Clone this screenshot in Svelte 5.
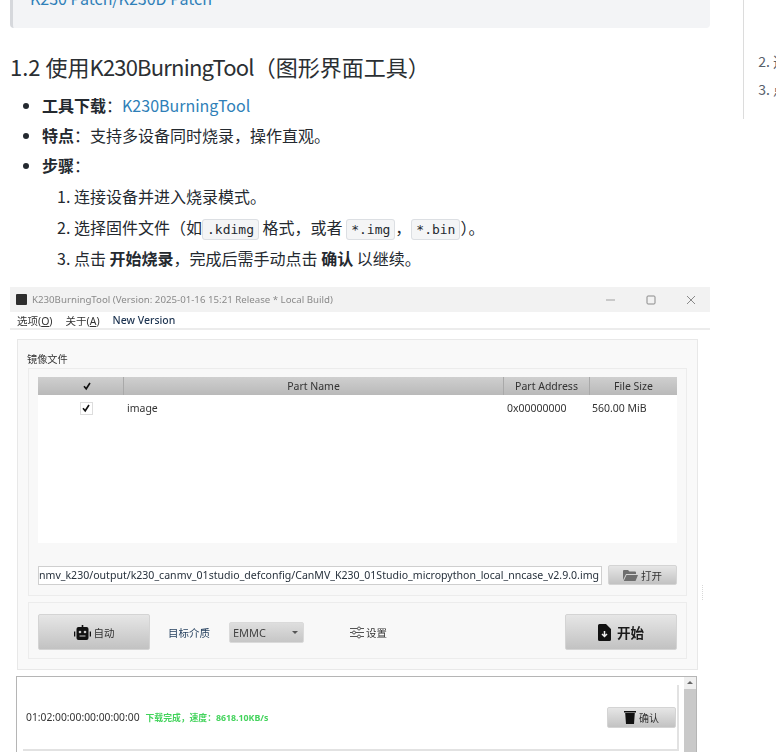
<script>
  const rows = [
    { n: '工具下载', link: 'K230BurningTool' },
    { n: '特点', text: '支持多设备同时烧录，操作直观。' }
  ];
</script>

<div class="page">
  <main class="doc">
    <div class="note"><a href="#p">K230 Patch/K230D Patch</a></div>
    <h3>1.2 使用<span class="latin">K230BurningTool</span>（图形界面工具）</h3>
    <ul>
      {#each rows as r}
        <li>
          <strong>{r.n}</strong>：{#if r.link}<a href="#t">{r.link}</a>{:else}{r.text}{/if}
        </li>
      {/each}
      <li class="steps">
        <div class="stephead"><strong>步骤</strong>：</div>
        <ol>
          <li>连接设备并进入烧录模式。</li>
          <li>选择固件文件（如<code>.kdimg</code> 格式，或者 <code>*.img</code>，<code>*.bin</code>）。</li>
          <li>点击 <strong>开始烧录</strong>，完成后需手动点击 <strong>确认</strong> 以继续。</li>
        </ol>
      </li>
    </ul>

    <div class="shot">
      <span class="speck"></span>
      <div class="titlebar">
        <span class="appicon"></span>
        <span class="title">K230BurningTool (Version: 2025-01-16 15:21 Release * Local Build)</span>
        <span class="winctl">
          <svg width="12" height="12" viewBox="0 0 12 12"><path d="M1 6h9" stroke="#a0a0a0" fill="none" /></svg>
          <svg width="12" height="12" viewBox="0 0 12 12"><rect x="2" y="2" width="8" height="8" rx="1" stroke="#8a8a8a" fill="none" /></svg>
          <svg width="12" height="12" viewBox="0 0 12 12"><path d="M2 2l8 8M10 2l-8 8" stroke="#8a8a8a" fill="none" /></svg>
        </span>
      </div>
      <div class="menubar">
        <span>选项(<u>O</u>)</span><span>关于(<u>A</u>)</span><span class="nv">New Version</span>
      </div>

      <div class="body">
        <section class="outer">
          <div class="legend">镜像文件</div>
          <div class="group filegroup">
            <div class="table">
              <div class="thead">
                <span class="c1"><svg class="tick" viewBox="0 0 10 10"><path d="M2 5.200l2.200 2.600L8 2" /></svg></span>
                <span class="c2">Part Name</span>
                <span class="c3">Part Address</span>
                <span class="c4">File Size</span>
              </div>
              <div class="trow">
                <span class="c1"><span class="check"><svg class="tick" viewBox="0 0 10 10"><path d="M2 5.200l2.200 2.600L8 2" /></svg></span></span>
                <span class="c2 name">image</span>
                <span class="c3 val">0x00000000</span>
                <span class="c4 val">560.00 MiB</span>
              </div>
            </div>
            <div class="pathrow">
              <div class="path"><span>nmv_k230/output/k230_canmv_01studio_defconfig/CanMV_K230_01Studio_micropython_local_nncase_v2.9.0.img</span></div>
              <button class="btn open">
                <svg width="15" height="12" viewBox="0 0 15 12"><path d="M0 2a1 1 0 0 1 1-1h4l1.500 1.500H12a1 1 0 0 1 1 1V5H3L0 11zM3.500 6H15l-2.500 6H.8z" fill="#6e6e6e" /></svg>
                打开
              </button>
            </div>
          </div>

          <div class="group actions">
            <button class="btn big auto">
              <svg width="17" height="15" viewBox="0 0 17 15"><path d="M7.700 0h1.600v2h3.200a2 2 0 0 1 2 2v9a2 2 0 0 1-2 2h-8a2 2 0 0 1-2-2V4a2 2 0 0 1 2-2h3.200zM0 6.500h1.300v5H0zM15.700 6.500H17v5h-1.300z" fill="#111" /><circle cx="6" cy="7" r="1.300" fill="#ccc" /><circle cx="11" cy="7" r="1.300" fill="#ccc" /><path d="M5.500 11h6" stroke="#ccc" /></svg>
              自动
            </button>
            <span class="media">目标介质</span>
            <span class="combo">EMMC<i></i></span>
            <span class="settings">
              <svg width="14" height="13" viewBox="0 0 14 13"><g stroke="#555" fill="#f7f7f7"><path d="M0 2.500h14M0 6.500h14M0 10.500h14" /><circle cx="9" cy="2.500" r="1.500" /><circle cx="4" cy="6.500" r="1.500" /><circle cx="9" cy="10.500" r="1.500" /></g></svg>
              设置
            </span>
            <button class="btn big start">
              <svg width="13" height="17" viewBox="0 0 13 17"><path d="M1.500 0H8l5 5v10.500a1.500 1.500 0 0 1-1.500 1.500h-10A1.500 1.500 0 0 1 0 15.500v-14A1.500 1.500 0 0 1 1.500 0z" fill="#111" /><path d="M6.500 7v5M4 10l2.500 2.500L9 10" stroke="#eee" stroke-width="1.500" fill="none" /></svg>
              开始
            </button>
          </div>
        </section>

        <section class="log">
          <div class="logmain">
            <div class="entry">
              <span class="addr">01:02:00:00:00:00:00:00</span>
              <span class="ok">下载完成，速度：8618.10KB/s</span>
              <button class="btn confirm">
                <svg width="12" height="14" viewBox="0 0 12 14"><path d="M0 1h12v1.500H0zM1.200 3h9.600L10 14H2z" fill="#111" /></svg>
                确认
              </button>
            </div>
          </div>
          <div class="scrollbar"><i></i></div>
        </section>
      </div>
    </div>
  </main>

  <aside class="toc">
    <ol start="2">
      <li>选择固件</li>
      <li>点击开始</li>
    </ol>
  </aside>
</div>

<style>
  :global(body) {
    margin: 0;
    background: #fff;
    overflow: hidden;
  }
  .page {
    width: 776px;
    height: 752px;
    overflow: hidden;
    display: flex;
    align-items: flex-start;
    font-family: "Noto Sans CJK SC", "Noto Sans", sans-serif;
    color: #24292f;
    font-size: 16px;
  }
  a { color: #2f7fb8; text-decoration: none; }
  .doc {
    width: 700px;
    margin-left: 10px;
    flex: none;
  }
  .note {
    height: 28px;
    box-sizing: border-box;
    background: #f3f4f6;
    border-left: 3px solid #d6d8dc;
    border-radius: 0 0 4px 4px;
    padding-left: 17px;
    line-height: 10px;
    overflow: hidden;
  }
  .note a { position: relative; top: -7px; display: block; }
  h3 {
    margin: 20px 0 0 0;
    font-size: 22px;
    font-weight: 400;
    line-height: 36px;
    color: #2b2f33;
  }
  .latin { letter-spacing: -0.8px; }
  ul {
    margin: 6px 0 0;
    padding: 0 0 0 32px;
    line-height: 30px;
  }
  ul > li { height: 30px; }
  ul > li.steps { height: auto; }
  .stephead { height: 30px; }
  ol {
    margin: 1px 0 0;
    padding: 0 0 0 32px;
    line-height: 31px;
  }
  ol > li { height: 31px; }
  strong { font-weight: 700; }
  code {
    font-family: "DejaVu Sans Mono", monospace;
    font-size: 13px;
    line-height: 1;
    background: #f4f5f6;
    border: 1px solid #dcdfe3;
    border-radius: 3px;
    padding: 2px 4px;
  }
  .shot {
    position: relative;
    margin-top: 13px;
    width: 700px;
    height: 470px;
    overflow: hidden;
    filter: blur(0.35px);
    font-family: "Noto Sans", "Noto Sans CJK SC", sans-serif;
    font-size: 10.500px;
    color: #333;
    background: #fff;
  }
  .speck {
    position: absolute;
    left: 692px;
    top: 298px;
    height: 15px;
    border-left: 1px dotted #d8d8d8;
  }
  .titlebar {
    height: 25px;
    background: #f2f2f2;
    display: flex;
    align-items: center;
    padding: 0 0 0 6px;
    color: #8a8a8a;
    font-size: 9.700px;
  }
  .appicon {
    width: 11px;
    height: 11px;
    background: #2e2e2e;
    border-radius: 1px;
    margin-right: 5px;
  }
  .winctl {
    margin-left: auto;
    display: flex;
    gap: 28px;
    margin-right: 13px;
  }
  .menubar {
    height: 16px;
    display: flex;
    align-items: center;
    gap: 13px;
    padding-left: 7px;
    border-bottom: 2px solid #ececec;
    font-size: 10.500px;
    color: #333;
  }
  .nv { color: #1c3350; font-weight: 500; font-size: 10.500px; }
  .body {
    padding: 9px 12px 0 6px;
  }
  .outer {
    border: 1px solid #e8e8e8;
    background: #f9f9f9;
    padding: 12px 10px 10px 10px;
    margin-left: 1px;
    width: 659px;
  }
  .legend {
    font-size: 10.200px;
    line-height: 14px;
    color: #333;
    margin-bottom: 2px;
    margin-left: -1px;
  }
  .group {
    border: 1px solid #ececec;
    background: #f8f8f8;
  }
  .filegroup {
    padding: 8px 9px 0;
    height: 228px;
    box-sizing: border-box;
  }
  .table {
    background: #fff;
    height: 166px;
  }
  .thead {
    height: 18px;
    display: flex;
    background: linear-gradient(#cfcfcf, #b9b9b9);
    align-items: center;
    color: #333;
  }
  .trow {
    display: flex;
    height: 26px;
    align-items: center;
  }
  .c1 { width: 85px; flex: none; display: flex; justify-content: center; padding-left: 12px; box-sizing: border-box; }
  .c2 { flex: 1; text-align: center; }
  .c3 { width: 85px; flex: none; text-align: center; }
  .c4 { width: 87px; flex: none; text-align: center; }
  .thead .c2, .thead .c3, .thead .c4 { border-left: 1px solid #a9a9a9; line-height: 18px; }
  .c2.name { text-align: left; padding-left: 4px; }
  .val { white-space: nowrap; text-align: left; padding-left: 2px; box-sizing: border-box; }
  .tick { width: 10px; height: 10px; }
  .tick path { fill: none; stroke: #111; stroke-width: 1.600; }
  .check {
    width: 11px;
    height: 11px;
    border: 1px solid #ddd;
    background: #fff;
    display: flex;
  }
  .pathrow {
    display: flex;
    gap: 6px;
    margin-top: 22px;
    align-items: center;
  }
  .path {
    flex: 1;
    min-width: 0;
    height: 19px;
    border: 1px solid #cfcfcf;
    background: #fff;
    box-sizing: border-box;
    line-height: 17px;
    font-size: 10.570px;
    color: #27313c;
    padding-left: 0;
    white-space: nowrap;
    overflow: hidden;
  }
  .btn {
    font-family: inherit;
    border: 1px solid #d4d4d4;
    border-radius: 2px;
    background: linear-gradient(#e6e6e6, #c2c2c2);
    display: flex;
    align-items: center;
    justify-content: center;
    gap: 3px;
    color: #333;
    padding: 0;
  }
  .open {
    width: 69px;
    height: 20px;
    flex: none;
    font-size: 10.500px;
  }
  .actions {
    margin-top: 6px;
    height: 57px;
    box-sizing: border-box;
    display: flex;
    align-items: center;
    padding: 3px 9px 0;
  }
  .big {
    width: 112px;
    height: 36px;
    flex: none;
  }
  .auto { font-size: 10.500px; }
  .start {
    margin-left: auto;
    font-size: 13.500px;
    font-weight: 700;
    gap: 6px;
    color: #1a1a1a;
  }
  .media { margin-left: 18px; font-size: 10.500px; color: #26415f; }
  .combo {
    margin-left: 19px;
    width: 75px;
    height: 21px;
    box-sizing: border-box;
    background: linear-gradient(#dedede, #c6c6c6);
    border: 1px solid #dadada;
    border-radius: 2px;
    font-size: 11px;
    display: flex;
    align-items: center;
    padding-left: 3px;
    color: #444;
  }
  .combo i {
    margin-left: auto;
    margin-right: 5px;
    border: 3px solid transparent;
    border-top: 3px solid #555;
    border-bottom: 0;
  }
  .settings {
    margin-left: 46px;
    display: flex;
    align-items: center;
    gap: 2px;
    font-size: 10.500px;
  }
  .log {
    margin-top: 6px;
    height: 120px;
    width: 681px;
    border: 1px solid #b5b5b5;
    border-bottom: 0;
    display: flex;
    box-sizing: border-box;
  }
  .logmain { flex: 1; padding: 8px 5px 0 6px; }
  .entry {
    height: 66px;
    box-sizing: border-box;
    border-bottom: 2px solid #e2e2e2;
    border-right: 2px solid #e2e2e2;
    display: flex;
    align-items: center;
    padding-left: 3px;
    padding-right: 1px;
  }
  .addr { font-size: 10.300px; color: #333; }
  .ok { margin-left: 6px; font-size: 8.800px; font-weight: 700; color: #43d35c; }
  .confirm {
    margin-left: auto;
    width: 69px;
    height: 21px;
    font-size: 10px;
    flex: none;
  }
  .scrollbar {
    width: 12px;
    background: linear-gradient(#efefef 12px, #c9c9c9 12px);
    position: relative;
  }
  .scrollbar i {
    position: absolute;
    left: 3px;
    top: 4px;
    border: 3px solid transparent;
    border-bottom: 3px solid #666;
    border-top: 0;
  }
  .toc {
    flex: none;
    margin-left: 33px;
    width: 33px;
    height: 119px;
    box-sizing: border-box;
    border-left: 1px solid #dcdcdc;
    overflow: hidden;
    white-space: nowrap;
    font-size: 14px;
    color: #57606a;
  }
  .toc ol {
    margin-top: 47px;
    padding-left: 29px;
    line-height: 28px;
  }
  .toc ol > li { height: 28px; }
</style>
